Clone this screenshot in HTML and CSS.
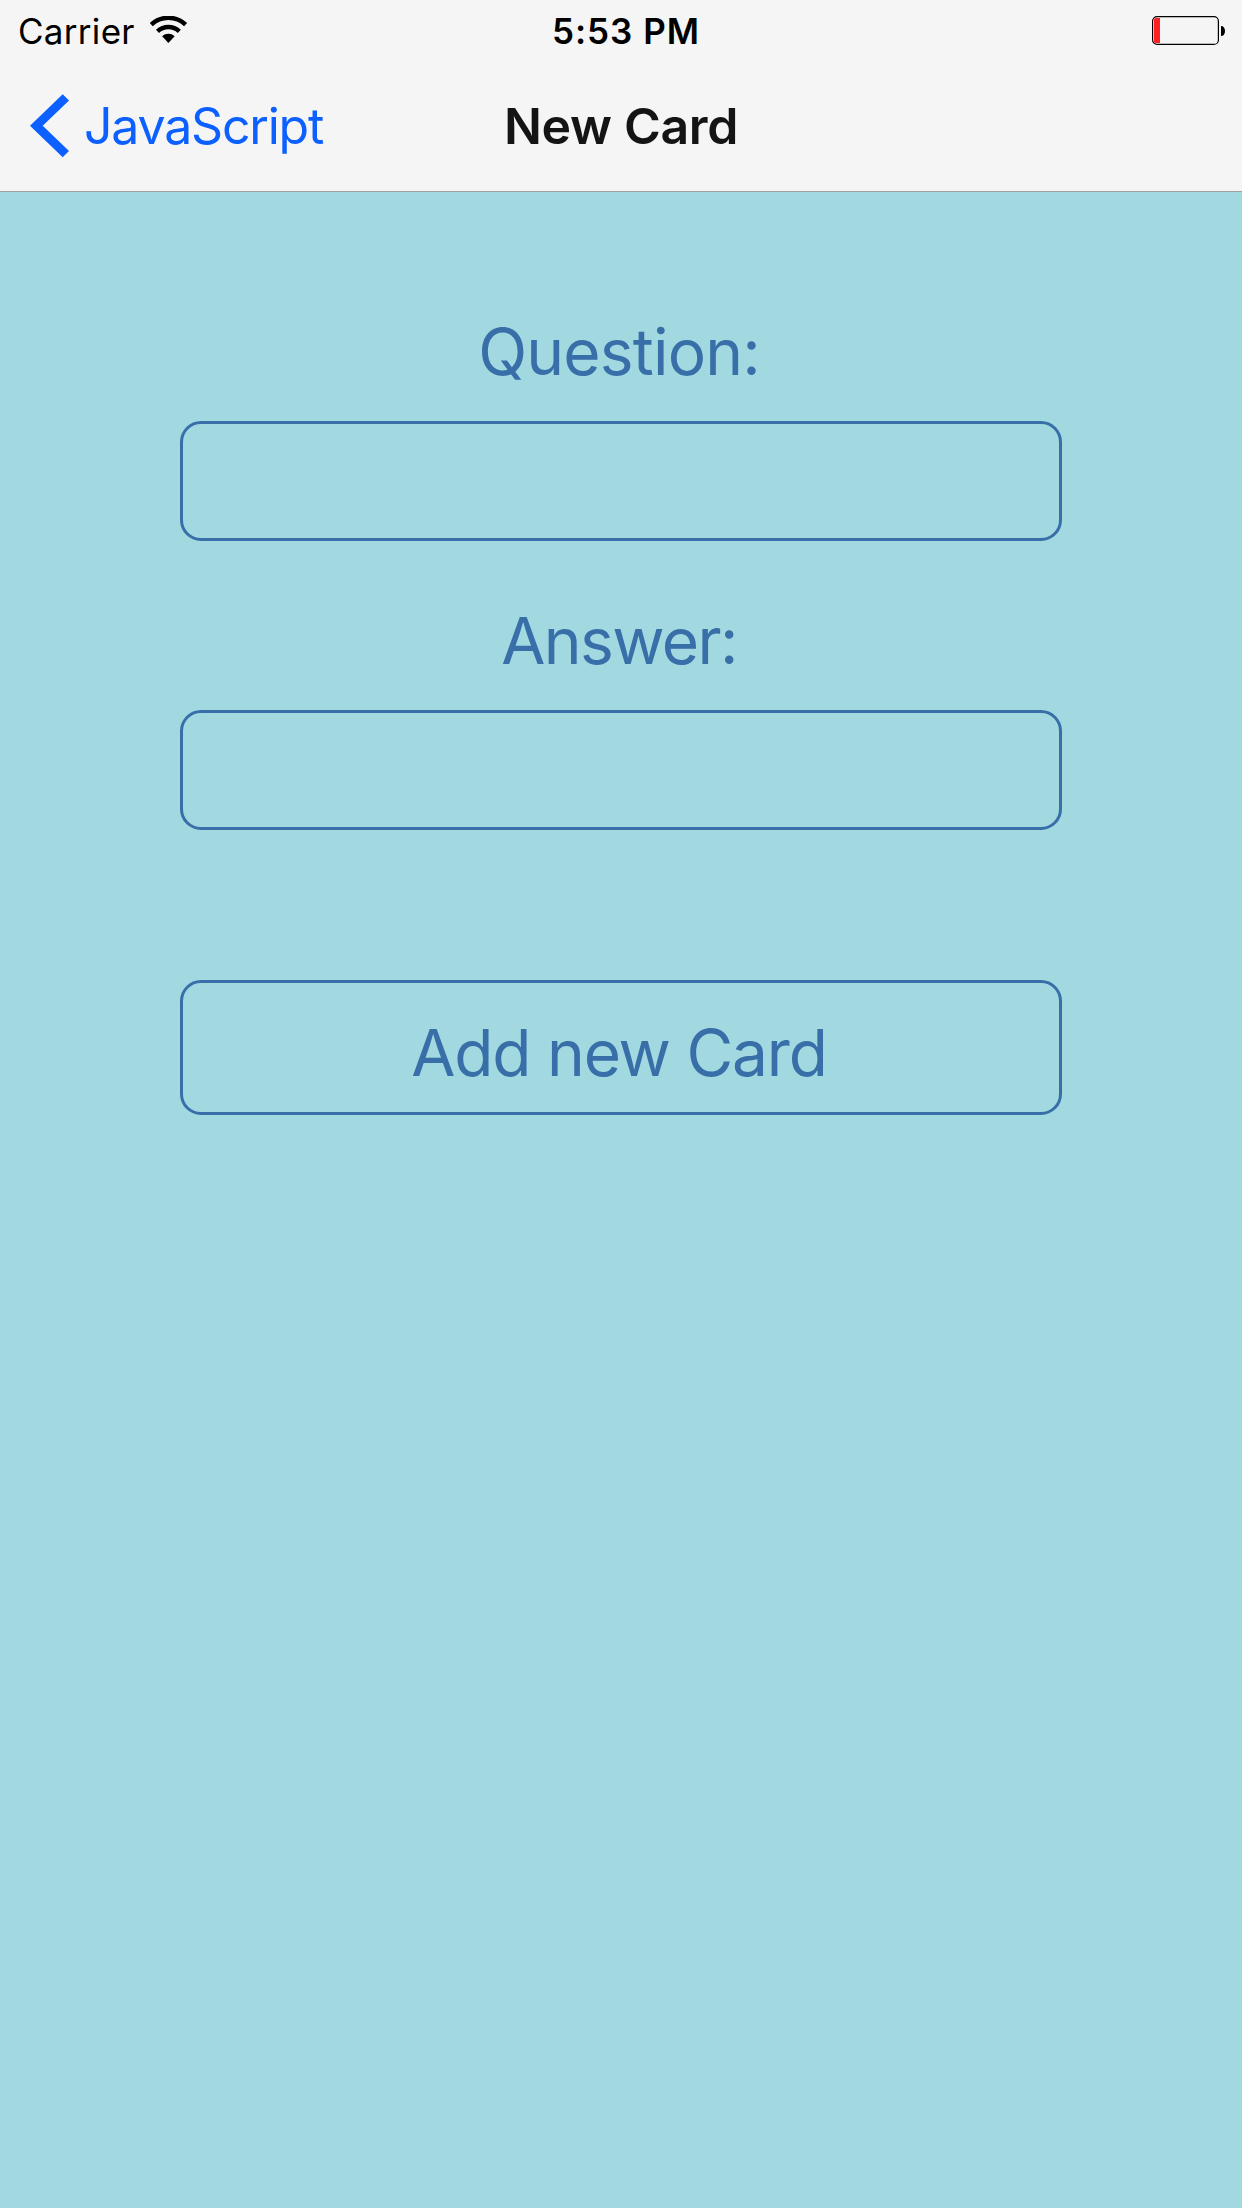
FILE: index.html
```html
<!DOCTYPE html>
<html lang="en">
<head>
<meta charset="utf-8">
<title>New Card</title>
<link rel="stylesheet" href="styles.css">
</head>
<body>
<header class="header">
  <div class="status-bar">
    <div class="carrier">
      <span>Carrier</span>
      <svg class="wifi" width="38" height="28" viewBox="0 0 38 28" aria-hidden="true">
        <path d="M1.2 8.6A25.2 25.2 0 0 1 35.6 8.6M7.5 15.3A16 16 0 0 1 29.3 15.3" fill="none" stroke="#000" stroke-width="4.5"/>
        <path d="M18.4 27L12.1 20.2A9.3 9.3 0 0 1 24.7 20.2Z"/>
      </svg>
    </div>
    <div class="time">5:53 PM</div>
    <svg class="battery" width="73" height="29" viewBox="0 0 73 29" aria-hidden="true">
      <rect x=".6" y=".6" width="65.800" height="27.800" rx="4.5" fill="none" stroke="#000" stroke-width="1.2"/>
      <path d="M8 2H3.500Q2 2 2 3.500V25.500Q2 27 3.500 27H8Z" fill="#ff2024"/>
      <path d="M69 10C71.500 10 73 12 73 15S71.500 20 69 20Z"/>
    </svg>
  </div>
  <nav class="nav-bar">
    <a class="back">
      <svg width="39" height="64" viewBox="0 0 39 64" aria-hidden="true">
        <path d="M32.700 .3L39 6.500L12.700 31.700L39 57L32.700 63.200L0 31.700Z" fill="#0b60ff"/>
      </svg>
      <span>JavaScript</span>
    </a>
    <h1 class="title">New Card</h1>
  </nav>
</header>
<main class="form">
  <label class="label label-question" for="question">Question:</label>
  <input class="field" id="question" type="text">
  <label class="label label-answer" for="answer">Answer:</label>
  <input class="field" id="answer" type="text">
  <button class="submit" type="button">Add new Card</button>
</main>
</body>
</html>
```
FILE: styles.css
```css
* {
  box-sizing: border-box;
}

body {
  margin: 0;
  min-height: 2208px;
  background: #a2d9e0;
  font-family: Inter, "Liberation Sans", sans-serif;
}

.header {
  height: 192px;
  background: #f5f5f5;
  border-bottom: 1px solid #a0a0a0;
}

.status-bar {
  display: grid;
  grid-template-columns: 1fr auto 1fr;
  height: 60px;
  padding: 0 17px 0 18px;
  font-size: 35px;
  line-height: 62px;
  color: #000;
}

.carrier {
  display: flex;
  letter-spacing: 0.3px;
}

.wifi {
  margin: 16px 0 0 15px;
}

.time {
  padding-left: 9px;
  font-weight: 560;
  letter-spacing: 1px;
}

.battery {
  justify-self: end;
  margin-top: 16px;
}

.nav-bar {
  display: grid;
  grid-template-columns: 1fr auto 1fr;
  line-height: 132px;
  font-size: 50px;
}

.back {
  display: flex;
  gap: 15px;
  padding-left: 30px;
  color: #0b60ff;
  font-weight: 420;
  letter-spacing: -1.2px;
}

.back svg {
  margin-top: 34px;
}

.title {
  margin: 0;
  font-size: inherit;
  font-weight: 590;
  letter-spacing: -0.33px;
  color: #141414;
}

.form {
  display: flex;
  flex-direction: column;
  width: 882px;
  margin: 0 auto;
  padding-top: 120px;
}

.label,
.submit {
  font-size: 64px;
  font-weight: 420;
  line-height: 80px;
  text-align: center;
  color: #386fa9;
}

.label {
  padding-right: 4px;
}

.label-question {
  letter-spacing: -0.8px;
}

.label-answer {
  letter-spacing: -1.6px;
}

.field,
.submit {
  width: 100%;
  border: 3px solid #386fa9;
  border-radius: 21px;
  background: transparent;
  font-family: inherit;
  outline: none;
}

.field {
  height: 120px;
  margin: 29px 0 60px;
  padding: 0 24px;
  font-size: 64px;
  color: #386fa9;
}

.submit {
  height: 135px;
  margin-top: 90px;
  padding: 30px 4px 19px 0;
  letter-spacing: -1.2px;
}
```
